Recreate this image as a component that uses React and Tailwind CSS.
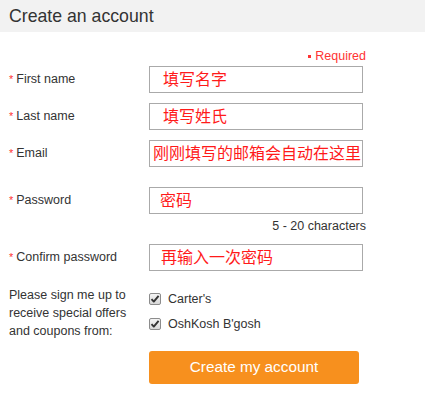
import React from "react";

const font = { fontFamily: '"Liberation Sans", Arial, "Noto Sans CJK SC", sans-serif' };

function Star() {
  return <span className="text-[#ff3333] mr-[3px] text-[11px]">*</span>;
}

function Field({ label, value, pad = "pl-[13px]", mt }) {
  return (
    <div className={`flex items-center ${mt}`}>
      <div className="w-[140px] shrink-0 text-[12.5px] text-[#333]">
        <Star />
        {label}
      </div>
      <div
        className={`w-[214px] h-[27px] border border-[#aaa] bg-white flex items-center ${pad} text-[16px] text-[#ff1a1a] whitespace-nowrap overflow-hidden`}
      >
        {value}
      </div>
    </div>
  );
}

function Check({ label }) {
  return (
    <div className="flex items-center h-[18px]">
      <div className="w-[12px] h-[12px] border border-[#8c8c8c] rounded-[2px] bg-gradient-to-b from-[#f4f4f4] to-[#d8d8d8] flex items-center justify-center">
        <svg width="10" height="10" viewBox="0 0 10 10">
          <path d="M1.5 5.2 L3.8 7.6 L8.6 1.8" stroke="#333" strokeWidth="1.9" fill="none" strokeLinejoin="round" />
        </svg>
      </div>
      <span className="ml-[7px] text-[12.5px] text-[#333]">{label}</span>
    </div>
  );
}

export default function App() {
  return (
    <div className="w-[425px] h-[406px] bg-white" style={font}>
      <div className="h-[32px] bg-[#f2f2f2] flex items-center pl-[9px] text-[17.7px] text-[#333]">
        Create an account
      </div>
      <div className="pl-[9px]">
        <div className="w-[357px] flex justify-end items-center h-[12px] mt-[18px] text-[12.5px] text-[#ff3333]">
          <span className="w-[3px] h-[3px] bg-[#ff3333] mr-[4px]"></span>
          Required
        </div>
        <Field label="First name" value="填写名字" mt="mt-[4px]" />
        <Field label="Last name" value="填写姓氏" mt="mt-[10px]" />
        <Field label="Email" value="刚刚填写的邮箱会自动在这里" pad="pl-[3px]" mt="mt-[10px]" />
        <Field label="Password" value="密码" pad="pl-[10px]" mt="mt-[20px]" />
        <div className="w-[357px] text-right text-[12.5px] text-[#333] mt-[4px] leading-[16px]">
          5 - 20 characters
        </div>
        <Field label="Confirm password" value="再输入一次密码" pad="pl-[11px]" mt="mt-[10px]" />
        <div className="flex mt-[15px]">
          <div className="w-[140px] shrink-0 text-[12.5px] leading-[18px] text-[#333]">
            Please sign me up to
            <br />
            receive special offers
            <br />
            and coupons from:
          </div>
          <div className="flex flex-col gap-[7px] pt-[4px]">
            <Check label="Carter's" />
            <Check label="OshKosh B'gosh" />
          </div>
        </div>
        <div className="flex mt-[11px]">
          <div className="w-[140px] shrink-0"></div>
          <button className="w-[210px] h-[33px] bg-[#f7901e] rounded-[3px] text-white text-[15.3px] flex items-center justify-center">
            Create my account
          </button>
        </div>
      </div>
    </div>
  );
}
